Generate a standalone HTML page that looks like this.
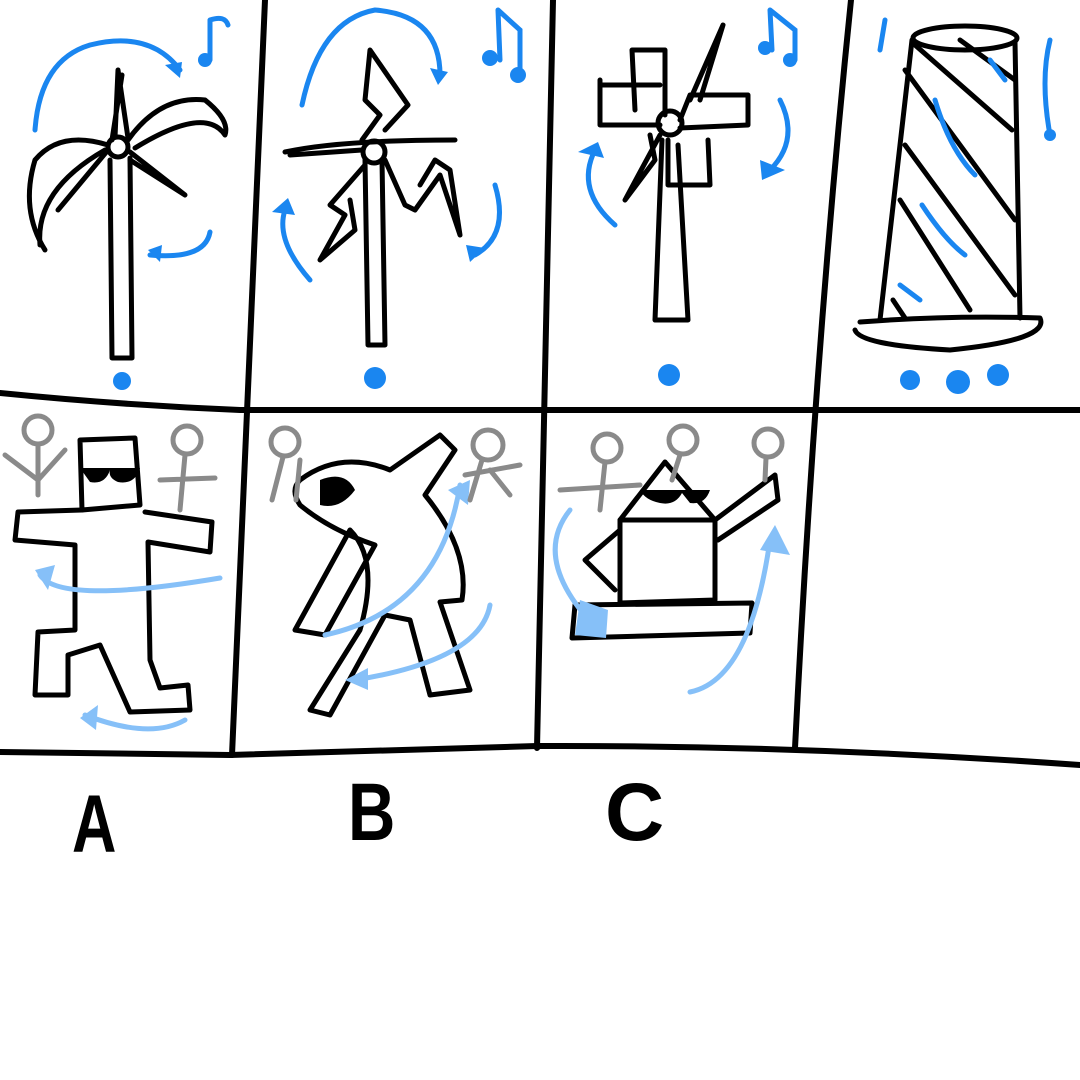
<!DOCTYPE html>
<html><head><meta charset="utf-8"><style>html,body{margin:0;padding:0;background:#fff}svg{display:block}</style></head>
<body>
<svg width="1080" height="1080" viewBox="0 0 1080 1080" xmlns="http://www.w3.org/2000/svg">
<g fill="none" stroke="#000" stroke-width="6" stroke-linecap="round" stroke-linejoin="round">
<path d="M265 0 L232 755"/>
<path d="M553 0 L537 748"/>
<path d="M851 0 Q815 350 795 748"/>
<path d="M0 393 Q120 405 240 410 L1080 410"/>
<path d="M0 752 L230 755 L537 746 Q800 745 1080 765"/>
</g>
<g fill="none" stroke="#000" stroke-width="5" stroke-linecap="round" stroke-linejoin="round">
<path d="M110 160 L112 358 L132 358 L130 158"/>
<circle cx="118" cy="147" r="10"/>
<path d="M108 145 Q60 130 35 160 Q20 210 45 250 M40 245 Q35 190 105 150 M108 150 L58 210"/>
<path d="M115 137 L118 70 L128 138 M112 140 L122 75"/>
<path d="M128 140 Q160 95 205 100 Q230 120 225 135 Q205 105 135 148"/>
<path d="M130 152 L185 195 L130 160"/>
<path d="M365 160 L368 345 L385 345 L382 160"/>
<circle cx="374" cy="152" r="11"/>
<path d="M285 152 Q340 140 455 140 M290 155 L362 150"/>
<path d="M362 140 L380 115 L365 100 L370 50 L408 105 L385 130"/>
<path d="M365 165 L330 205 L345 215 L320 260 L355 230 L350 200"/>
<path d="M385 160 L405 205 L415 210 L440 175 L460 235 L450 170 L435 160 L420 185"/>
<path d="M662 140 L655 320 L688 320 L678 145"/>
<circle cx="670" cy="123" r="12"/>
<path d="M635 110 L632 50 L665 50 L665 115 M600 80 L600 125 L660 125 M600 85 L660 85"/>
<path d="M680 120 L690 95 L748 95 L748 125 L680 128"/>
<path d="M668 140 L668 185 L710 185 L708 140"/>
<path d="M660 135 L625 200 L655 160 L650 135 M690 100 L723 25 L700 100"/>
<path d="M912 40 L880 320 M1015 42 L1020 318"/>
<ellipse cx="965" cy="38" rx="52" ry="12"/>
<path d="M860 322 Q950 315 1040 318 Q1050 340 950 350 Q860 345 855 330"/>
<path d="M905 70 L1015 220 M905 145 L1015 295 M900 200 L970 310 M915 45 L1012 130 M960 40 L1015 80 M893 300 L905 318"/>
<path d="M80 440 L135 438 L140 505 L82 510 Z"/>
<path d="M82 510 L18 512 L15 540 L75 545 L75 630 L38 632 L35 695 L68 695 L68 655 L100 645 L130 712 L190 710 L188 685 L160 688 L150 660 L148 542 L210 552 L212 522 L145 512"/>
<path d="M300 480 Q340 450 390 470 L440 435 L455 450 L425 495 Q470 550 462 600 L440 602 L470 690 L430 695 L410 620 L385 615 L330 715 L310 710 L360 630 Q380 560 350 530 L295 630 L325 635 L375 545 Q330 530 300 505 Q290 490 300 480"/>
<path d="M620 520 L715 520 L715 600 L620 603 Z"/>
<path d="M620 520 L665 462 L715 520 M715 520 L775 475 L778 500 L718 540"/>
<path d="M620 530 L585 560 L615 590"/>
<path d="M575 605 L752 603 L750 633 L572 638 Z"/>
</g>
<g fill="#000"><path d="M80 468 L140 468 Q135 485 118 482 Q108 478 110 470 Q105 485 90 482 Z"/>
<path d="M640 490 L710 490 Q705 505 690 503 L682 493 Q675 506 660 503 Q645 500 640 490"/>
<path d="M320 480 Q345 470 355 490 Q340 510 320 505 Z"/></g>
<g fill="none" stroke="#1a86f0" stroke-width="5" stroke-linecap="round">
<path d="M35 130 Q40 60 90 45 Q150 30 180 70"/>
<path d="M210 232 Q205 260 150 255"/>
<path d="M302 105 Q320 20 375 10 Q440 15 440 75"/>
<path d="M285 210 Q275 240 310 280"/>
<path d="M495 185 Q510 235 475 255"/>
<path d="M595 150 Q575 190 615 225"/>
<path d="M780 100 Q800 140 770 170"/>
<path d="M935 100 Q950 150 975 175 M922 205 Q945 240 965 255 M900 285 L920 300 M990 60 L1005 80"/>
<path d="M210 20 L210 60 M210 20 Q225 15 228 25 M498 10 L500 60 M498 10 L520 30 L520 75 M770 10 L772 50 M770 10 L795 30 L795 60 M885 20 L880 50 M1050 40 Q1040 80 1050 135"/>
</g>
<g fill="#1a86f0">
<circle cx="122" cy="381" r="9"/><circle cx="375" cy="378" r="11"/><circle cx="669" cy="375" r="11"/>
<circle cx="910" cy="380" r="10"/><circle cx="958" cy="382" r="12"/><circle cx="998" cy="375" r="11"/>
<path d="M165 65 L182 62 L180 78 Z M430 68 L448 72 L438 85 Z M272 212 L288 198 L295 215 Z M466 245 L485 248 L470 262 Z M578 152 L598 142 L604 158 Z M760 160 L785 170 L762 180 Z M148 250 L162 245 L160 262 Z"/>
<circle cx="205" cy="60" r="7"/><circle cx="490" cy="58" r="8"/><circle cx="518" cy="75" r="8"/><circle cx="765" cy="48" r="7"/><circle cx="790" cy="60" r="7"/><circle cx="1050" cy="135" r="6"/>
</g>
<g fill="none" stroke="#86c0f8" stroke-width="5" stroke-linecap="round">
<path d="M40 575 Q60 605 220 578"/>
<path d="M185 720 Q150 740 85 715"/>
<path d="M325 635 Q440 610 460 485"/>
<path d="M490 605 Q480 660 355 680"/>
<path d="M570 510 Q530 560 598 630"/>
<path d="M690 692 Q750 680 770 540"/>
</g>
<g fill="#86c0f8"><path d="M35 570 L55 565 L48 590 Z M80 718 L98 705 L96 730 Z M448 490 L470 480 L468 505 Z M345 680 L368 668 L368 690 Z M580 600 L608 610 L606 638 L575 635 Z M760 550 L775 525 L790 555 Z"/></g>
<g fill="none" stroke="#8a8a8a" stroke-width="5" stroke-linecap="round">
<circle cx="38" cy="430" r="14"/><path d="M38 444 L38 495 M5 455 L38 480 L65 450"/>
<circle cx="187" cy="440" r="14"/><path d="M185 455 L180 510 M160 480 L215 478"/>
<circle cx="285" cy="442" r="14"/><path d="M283 457 L272 500 M300 460 L296 500"/>
<circle cx="488" cy="445" r="15"/><path d="M482 460 L470 500 M490 470 L510 495 M465 475 L520 465"/>
<circle cx="607" cy="448" r="14"/><path d="M605 462 L600 510 M560 490 L640 485"/>
<circle cx="683" cy="440" r="14"/><path d="M680 455 L672 480"/>
<circle cx="768" cy="443" r="14"/><path d="M766 458 L765 480"/>
</g>
<g font-family="Liberation Sans, sans-serif" font-size="82" font-weight="bold" fill="#000">
<text x="72" y="852" transform="translate(72 852) scale(0.75 1) translate(-72 -852)">A</text>
<text x="348" y="840" transform="translate(348 840) scale(0.8 1) translate(-348 -840)">B</text>
<text x="605" y="840">C</text>
</g>
</svg>
</body></html>
